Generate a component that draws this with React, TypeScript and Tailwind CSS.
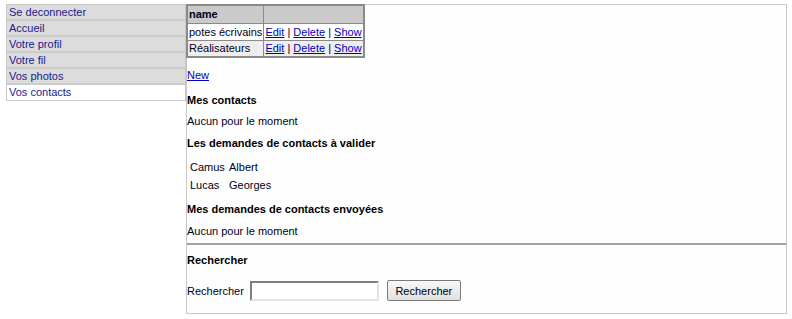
import React from "react";

const menu = ["Se deconnecter", "Accueil", "Votre profil", "Votre fil", "Vos photos"];

export default function App() {
  return (
    <div className="h-[319px] bg-white text-[11px] leading-[14px] text-[#000020]" style={{ fontFamily: '"Liberation Sans", Arial, sans-serif' }}>
      <div className="flex items-start pl-[6px] pt-[4px]">
        <div className="w-[180px] flex flex-col border border-[#c8c8c8]">
          {menu.map((m) => (
            <a key={m} href="#" className="h-[16px] leading-[15px] px-[2px] bg-[#dcdcdc] border-b-2 border-[#cbcbcb] text-[#1a1a8a]">
              {m}
            </a>
          ))}
          <a href="#" className="h-[15px] leading-[15px] px-[2px] bg-white text-[#1a1a8a]">Vos contacts</a>
        </div>

        <div className="w-[601px] h-[310px] border border-[#c8c8c8] bg-[#fefefe] flex flex-col">
          <table className="w-[176px] border-collapse border-2 border-[#8a8a8a] -mt-px -ml-px">
            <thead>
              <tr className="bg-[#cacaca] h-[18px]">
                <th className="text-left font-bold px-[1px] border border-[#8a8a8a] w-[77px]">name</th>
                <th className="border border-[#8a8a8a]"></th>
              </tr>
            </thead>
            <tbody>
              {["potes écrivains", "Réalisateurs"].map((n, i) => (
                <tr key={n} className={`h-[17px] ${i === 1 ? "bg-[#eeeeee]" : "bg-white"}`}>
                  <td className="px-[1px] border border-[#8a8a8a] whitespace-nowrap">{n}</td>
                  <td className="px-[1px] border border-[#8a8a8a] whitespace-nowrap">
                    <a href="#" className="underline text-[#0000bb]">Edit</a> | <a href="#" className="underline text-[#0000bb]">Delete</a> | <a href="#" className="underline text-[#0000bb]">Show</a>
                  </td>
                </tr>
              ))}
            </tbody>
          </table>

          <a href="#" className="mt-[10px] underline text-[#0000bb] self-start">New</a>
          <h3 className="mt-[11px] font-bold text-black">Mes contacts</h3>
          <p className="mt-[7px]">Aucun pour le moment</p>
          <h3 className="mt-[8px] font-bold text-black">Les demandes de contacts à valider</h3>
          <div className="mt-[8px] ml-[3px] flex flex-col">
            <div className="flex h-[18px] leading-[18px]"><span className="w-[39px]">Camus</span><span>Albert</span></div>
            <div className="flex h-[18px] leading-[18px]"><span className="w-[39px]">Lucas</span><span>Georges</span></div>
          </div>
          <h3 className="mt-[8px] font-bold text-black">Mes demandes de contacts envoyées</h3>
          <p className="mt-[8px]">Aucun pour le moment</p>
          <hr className="mt-[5px] border-t-2 border-[#a0a0a0]" />
          <h3 className="mt-[8px] font-bold text-black">Rechercher</h3>
          <div className="mt-[13px] flex items-center gap-[6px]">
            <span>Rechercher</span>
            <input className="w-[129px] h-[20px] border-2 border-t-[#808080] border-l-[#808080] border-b-[#e4e4e4] border-r-[#e4e4e4] bg-white" />
            <button className="ml-[2px] w-[74px] h-[21px] border border-[#7a7a7a] rounded-[2px] bg-gradient-to-b from-[#f8f8f8] to-[#e0e0e0] text-black text-[11px]">Rechercher</button>
          </div>
        </div>
      </div>
    </div>
  );
}
